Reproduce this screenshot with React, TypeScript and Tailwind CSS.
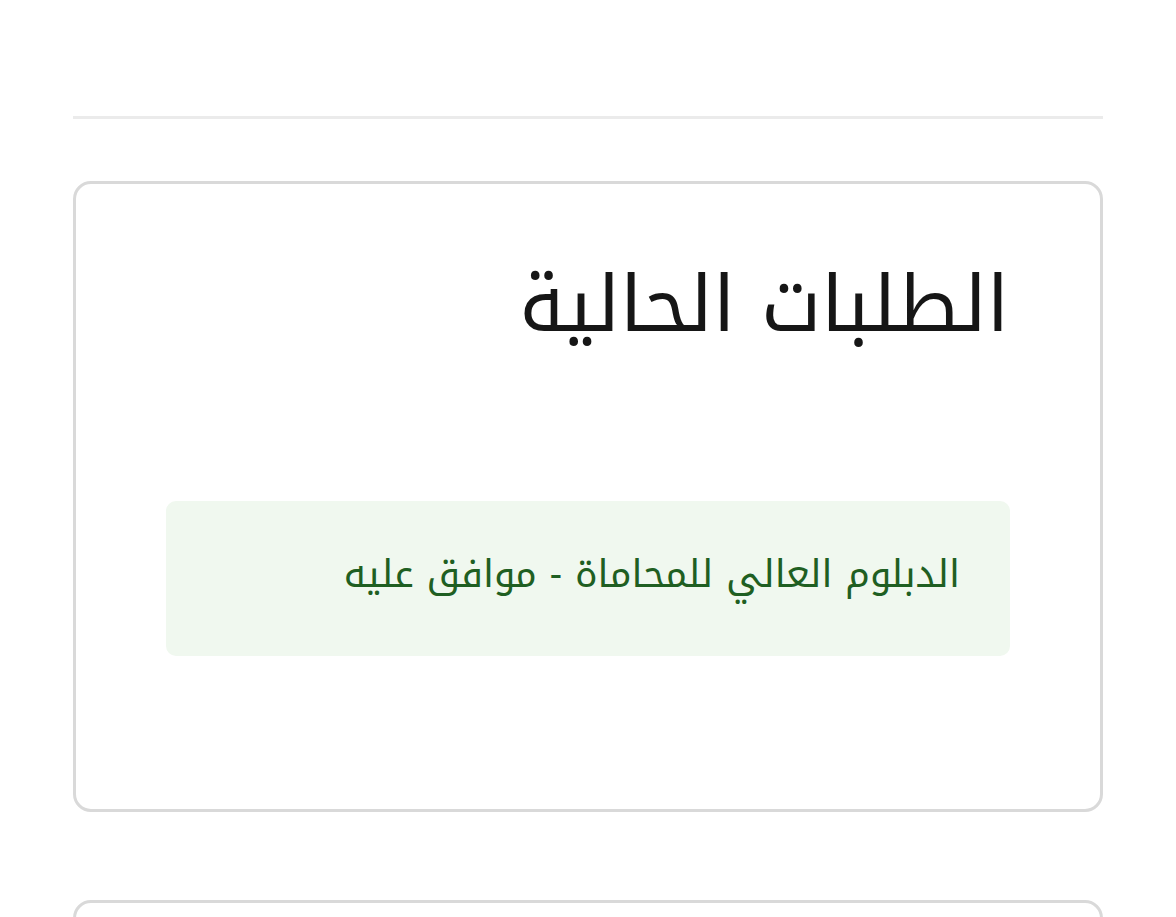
export default function App() {
  const requests = [{ title: 'الدبلوم العالي للمحاماة', status: 'موافق عليه' }]

  return (
    <div dir="rtl" className="min-h-screen bg-white px-[73px] pt-[116px] font-['Noto_Kufi_Arabic',sans-serif]">
      <hr className="border-0 border-t-[3px] border-[#ebebeb]" />

      {/* Current requests */}
      <section className="mt-[62px] rounded-[18px] border-[3px] border-[#d9d9d9] px-[90px] pt-[64px] pb-[153px]">
        <h2 className="pr-[1px] text-[77px] leading-[114px] font-normal text-[#161616]">الطلبات الحالية</h2>
        <div className="mt-[139px] flex flex-col gap-4">
          {requests.map((r) => (
            <div key={r.title} className="flex h-[155px] items-center rounded-[10px] bg-[#f0f8ef] px-[50px] pb-[8px]">
              <p className="text-[38px] leading-[57px] text-[#1f5f22]">
                {r.title} - {r.status}
              </p>
            </div>
          ))}
        </div>
      </section>

      <section className="mt-[88px] h-[200px] rounded-[18px] border-[3px] border-[#d9d9d9]" />
    </div>
  )
}
